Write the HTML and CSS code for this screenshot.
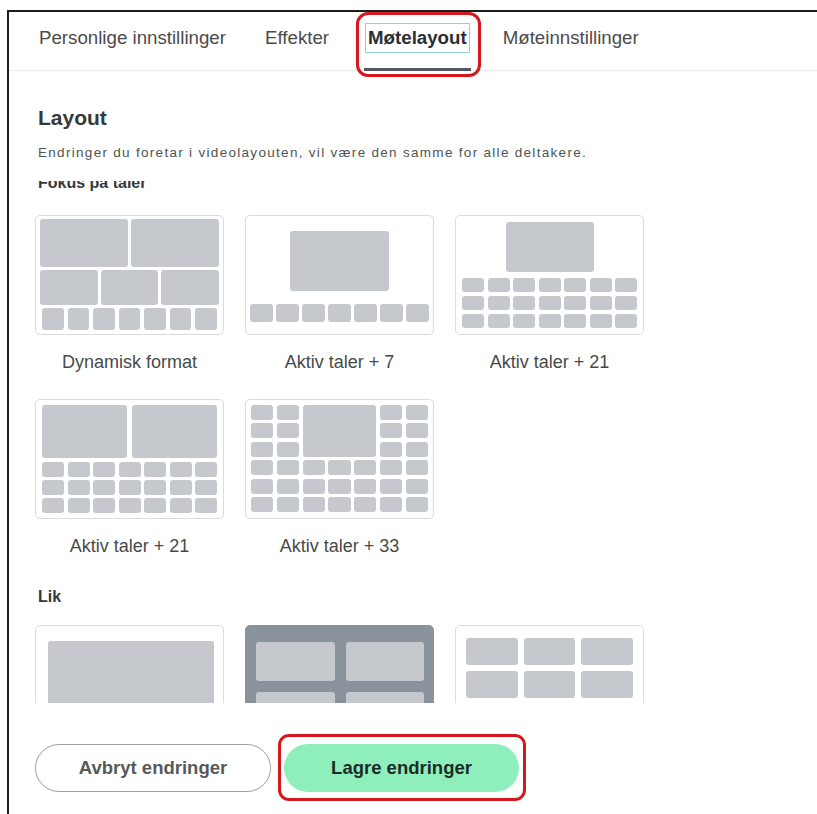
FILE: index.html
```html
<!DOCTYPE html>
<html lang="no">
<head>
<meta charset="utf-8">
<title>Innstillinger – Møtelayout</title>
<link rel="stylesheet" href="styles.css">
</head>
<body>
<div class="frame">
  <nav class="tabs">
    <span class="tab">Personlige innstillinger</span>
    <span class="tab">Effekter</span>
    <span class="tab active"><span class="focus">Møtelayout</span><span class="callout tab-callout"></span></span>
    <span class="tab last">Møteinnstillinger</span>
  </nav>

  <section class="panel">
    <h1 class="title">Layout</h1>
    <p class="desc">Endringer du foretar i videolayouten, vil være den samme for alle deltakere.</p>

    <div class="scroll">
      <div class="scroll-inner">
        <h2 class="group">Fokus på taler</h2>
        <div class="grid">
          <figure class="option">
            <div class="thumb dyn">
              <div class="row r1"><i></i><i></i></div>
              <div class="row r2"><i></i><i></i><i></i></div>
              <div class="row r3"><i></i><i></i><i></i><i></i><i></i><i></i><i></i></div>
            </div>
            <figcaption class="caption">Dynamisk format</figcaption>
          </figure>

          <figure class="option">
            <div class="thumb spk7">
              <i class="big"></i>
              <div class="row strip"><i></i><i></i><i></i><i></i><i></i><i></i><i></i></div>
            </div>
            <figcaption class="caption">Aktiv taler + 7</figcaption>
          </figure>

          <figure class="option">
            <div class="thumb spk21">
              <i class="big"></i>
              <div class="rows">
                <div class="row"><i></i><i></i><i></i><i></i><i></i><i></i><i></i></div>
                <div class="row"><i></i><i></i><i></i><i></i><i></i><i></i><i></i></div>
                <div class="row"><i></i><i></i><i></i><i></i><i></i><i></i><i></i></div>
              </div>
            </div>
            <figcaption class="caption">Aktiv taler + 21</figcaption>
          </figure>

          <figure class="option">
            <div class="thumb pair21">
              <div class="row pair"><i></i><i></i></div>
              <div class="rows">
                <div class="row"><i></i><i></i><i></i><i></i><i></i><i></i><i></i></div>
                <div class="row"><i></i><i></i><i></i><i></i><i></i><i></i><i></i></div>
                <div class="row"><i></i><i></i><i></i><i></i><i></i><i></i><i></i></div>
              </div>
            </div>
            <figcaption class="caption">Aktiv taler + 21</figcaption>
          </figure>

          <figure class="option">
            <div class="thumb spk33">
              <i></i><i></i><i class="center"></i><i></i><i></i>
              <i></i><i></i><i></i><i></i>
              <i></i><i></i><i></i><i></i>
              <i></i><i></i><i></i><i></i><i></i><i></i><i></i>
              <i></i><i></i><i></i><i></i><i></i><i></i><i></i>
              <i></i><i></i><i></i><i></i><i></i><i></i><i></i>
            </div>
            <figcaption class="caption">Aktiv taler + 33</figcaption>
          </figure>
        </div>

        <h2 class="group lik">Lik</h2>
        <div class="grid">
          <figure class="option">
            <div class="thumb solo"><i></i></div>
          </figure>
          <figure class="option">
            <div class="thumb quad selected"><i></i><i></i><i></i><i></i></div>
          </figure>
          <figure class="option">
            <div class="thumb nine"><i></i><i></i><i></i><i></i><i></i><i></i><i></i><i></i><i></i></div>
          </figure>
        </div>
      </div>
    </div>
  </section>

  <footer class="actions">
    <button class="btn ghost" type="button">Avbryt endringer</button>
    <span class="save-wrap">
      <button class="btn primary" type="button">Lagre endringer</button>
      <span class="callout save-callout"></span>
    </span>
  </footer>
</div>
</body>
</html>
```

FILE: styles.css
```css
* { box-sizing: border-box; }

html, body {
  margin: 0;
  background: #fff;
}

body {
  width: 817px;
  height: 814px;
  overflow: hidden;
  font-family: "Liberation Sans", Arial, sans-serif;
  color: #444;
}

/* dialog frame: only the top and left edges are visible */
.frame {
  margin: 10px 0 0 7px;
  height: 804px;
  border-top: 2px solid #1d1d1d;
  border-left: 2px solid #1d1d1d;
}

/* tab bar */
.tabs {
  display: flex;
  align-items: stretch;
  gap: 31px;
  height: 59px;
  padding-left: 26px;
  border-bottom: 1px solid #ececec;
}

.tab {
  position: relative;
  display: flex;
  align-items: center;
  padding: 0 4px 6px;
  font-size: 18.7px;
  color: #4b4b4b;
  white-space: nowrap;
}

.tab.last {
  margin-left: -6px;
}

.tab.active {
  font-weight: bold;
  color: #2b2f33;
}

.tab.active::after {
  content: "";
  position: absolute;
  left: 0;
  right: 3px;
  bottom: -1px;
  height: 3px;
  background: #4f5861;
}

.focus {
  margin-left: -3px;
  padding: 2px 2px;
  line-height: 24px;
  border: 1.5px solid #8fd2d8;
}

/* red highlight rings */
.callout {
  position: absolute;
  border: 3px solid #d5171f;
  border-radius: 12px;
  pointer-events: none;
}

.tab-callout {
  left: -8px;
  right: -7px;
  top: 0;
  bottom: -7px;
}

/* content */
.panel {
  padding-left: 26px;
}

.title {
  margin: 35px 0 0 3px;
  font-size: 21px;
  line-height: 24px;
  font-weight: bold;
  color: #343a3a;
}

.desc {
  margin: 15px 0 0 3px;
  font-size: 13.5px;
  line-height: 16px;
  letter-spacing: 1.3px;
  color: #4e5452;
  white-space: nowrap;
}

.scroll {
  margin-top: 20px;
  height: 522px;
  overflow: hidden;
}

/* list is scrolled a little, so the first group heading sits under the top edge */
.scroll-inner {
  margin-top: -8px;
}

.group {
  margin: 0 0 22px 3px;
  font-size: 16px;
  line-height: 20px;
  font-weight: bold;
  color: #333a39;
}

.group.lik {
  margin-top: 30px;
  margin-bottom: 18px;
}

.grid {
  display: grid;
  grid-template-columns: repeat(3, 189px);
  column-gap: 21px;
  row-gap: 26px;
}

.option {
  margin: 0;
  display: flex;
  flex-direction: column;
  align-items: center;
}

.caption {
  margin-top: 16px;
  font-size: 18px;
  line-height: 22px;
  color: #464b4a;
}

/* layout thumbnails */
.thumb {
  width: 189px;
  height: 120px;
  border: 1px solid #dcdcdc;
  border-radius: 5px;
  background: #fff;
}

.thumb i {
  display: block;
  background: #c5c8cc;
  border-radius: 3px;
}

.row {
  display: flex;
  gap: 3px;
}

.row i {
  flex: 1;
}

.rows {
  display: flex;
  flex-direction: column;
  gap: 3.5px;
}

/* Dynamisk format */
.dyn {
  display: flex;
  flex-direction: column;
  gap: 3px;
  padding: 3px 4px 4px;
}
.dyn .r1 { height: 48px; }
.dyn .r2 { height: 35px; }
.dyn .r3 { flex: 1; padding: 0 2px; gap: 4px; }

/* Aktiv taler + 7 */
.spk7 {
  display: flex;
  flex-direction: column;
  align-items: center;
  padding: 15px 4px 0;
}
.spk7 .big { width: 99px; height: 60px; }
.spk7 .strip { align-self: stretch; height: 18px; margin-top: 13px; }

/* Aktiv taler + 21 */
.spk21 {
  display: flex;
  flex-direction: column;
  align-items: center;
  padding: 6px 6px 0;
}
.spk21 .big { width: 88px; height: 50px; }
.spk21 .rows { align-self: stretch; margin-top: 6px; gap: 4px; }
.spk21 .rows .row { height: 14px; gap: 3.5px; }

/* Aktiv taler + 21, two speakers */
.pair21 {
  display: flex;
  flex-direction: column;
  padding: 5px 6px 0;
}
.pair21 .pair { height: 53px; gap: 5px; }
.pair21 .rows { margin-top: 4px; gap: 3px; }
.pair21 .rows .row { height: 15px; gap: 3.5px; }

/* Aktiv taler + 33 */
.spk33 {
  display: grid;
  grid-template-columns: repeat(7, 1fr);
  grid-template-rows: repeat(6, 1fr);
  gap: 3.5px;
  padding: 5px 5px 6px;
}
.spk33 .center {
  grid-column: 3 / 6;
  grid-row: 1 / 4;
}

/* Lik */
.solo {
  padding: 15px 9px 0 12px;
  overflow: hidden;
}
.solo i { height: 100px; }

.quad {
  display: grid;
  grid-template-columns: 1fr 1fr;
  grid-auto-rows: 39px;
  gap: 11px;
  padding: 16px 9px 0 10px;
  overflow: hidden;
}

.thumb.selected {
  background: #8a939b;
  border-color: #8a939b;
}

.nine {
  display: grid;
  grid-template-columns: repeat(3, 1fr);
  grid-auto-rows: 27px;
  gap: 6px;
  padding: 12px 10px 0;
  overflow: hidden;
}

/* footer buttons */
.actions {
  display: flex;
  gap: 13px;
  padding: 41px 0 0 26px;
}

.btn {
  height: 48px;
  border-radius: 24px;
  font-family: "Liberation Sans", Arial, sans-serif;
  font-size: 18.5px;
  font-weight: bold;
  cursor: pointer;
}

.ghost {
  width: 236px;
  background: #fff;
  border: 1.5px solid #9d9f9e;
  color: #565b5a;
}

.save-wrap {
  position: relative;
  display: block;
}

.primary {
  display: block;
  width: 235px;
  border: 0;
  background: #8eefbd;
  color: #1c2b27;
}

.save-callout {
  left: -6px;
  right: -7px;
  top: -10px;
  bottom: -9px;
  border-radius: 11px;
}
```
